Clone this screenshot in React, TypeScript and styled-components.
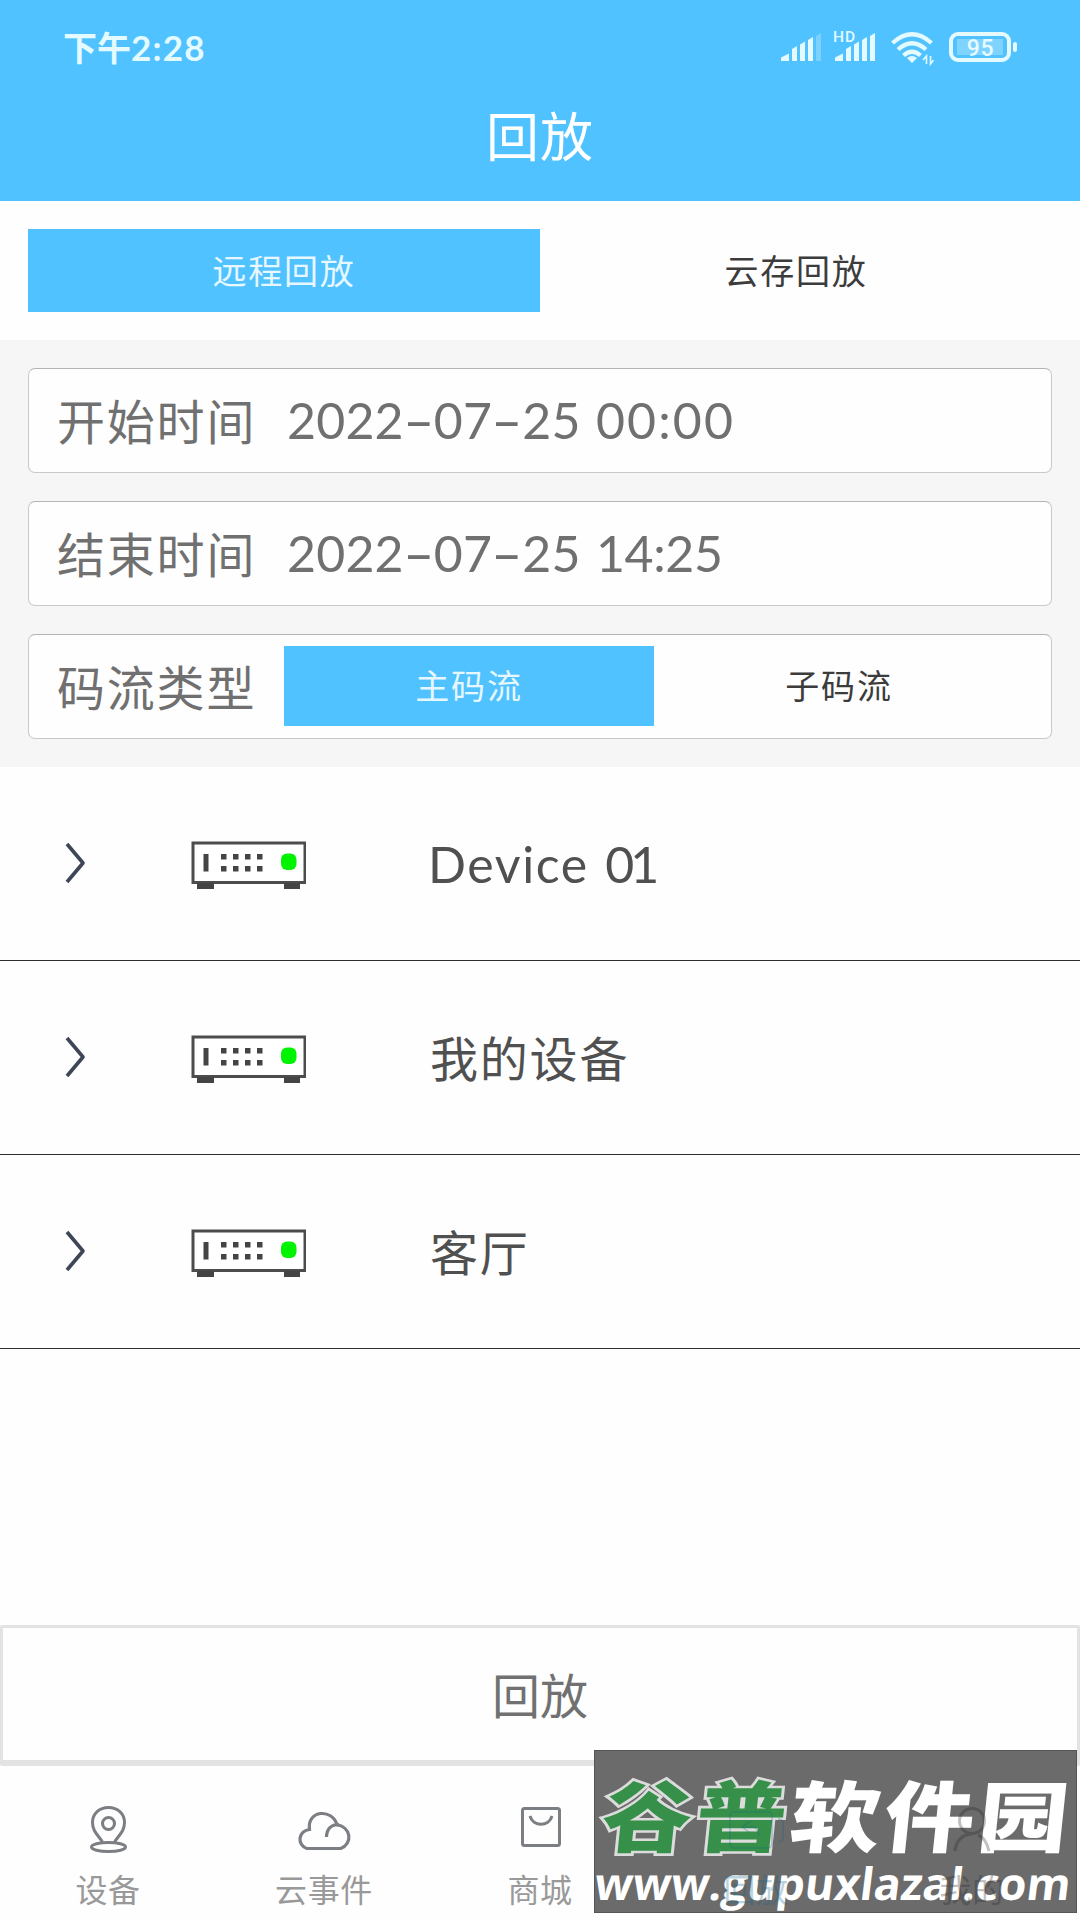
import React from 'react';
import styled, { createGlobalStyle } from 'styled-components';

const BLUE = '#4fc2ff';
const CJK = `'Noto Sans CJK SC', sans-serif`;

const Global = createGlobalStyle`
  * { box-sizing: border-box; }
  body { margin: 0; background: #fefefe; font-family: Lato, ${CJK}; }
  button { border: 0; padding: 0; margin: 0; background: none; font-family: inherit; }
`;

const Screen = styled.div`
  width: 1080px;
  height: 1920px;
  display: flex;
  flex-direction: column;
  overflow: hidden;
  position: relative;
`;

const Header = styled.header`
  height: 201px;
  background: ${BLUE};
  display: flex;
  flex-direction: column;
`;

const StatusBar = styled.div`
  height: 92px;
  padding: 0 62px 0 63px;
  display: flex;
  align-items: center;
  justify-content: space-between;
  color: #e4faff;
`;

const Clock = styled.span`
  display: flex;
  align-items: center;
  padding-top: 2px;
  font: 700 34px/50px ${CJK};
`;

const ClockDigits = styled.span`
  font-family: Lato, sans-serif;
  font-size: 35px;
  letter-spacing: 1.2px;
`;

const Title = styled.h1`
  margin: 0;
  height: 85px;
  text-align: center;
  color: #fff;
  font: 400 53px/85px ${CJK};
  letter-spacing: 1px;
`;

const TabBar = styled.div`
  height: 139px;
  padding: 28px;
  display: flex;
`;

const Segment = styled.button<{ $active?: boolean }>`
  flex: 1;
  height: 100%;
  padding-bottom: 2px;
  background: ${p => (p.$active ? BLUE : 'transparent')};
  color: ${p => (p.$active ? '#e6f7ff' : '#3c3c3c')};
  font: 400 34px/50px ${CJK};
  letter-spacing: 1.8px;
`;

const Filters = styled.section`
  height: 427px;
  padding: 28px;
  background: #f6f6f6;
  display: flex;
  flex-direction: column;
  gap: 28px;
`;

const Field = styled.div`
  height: 105px;
  border: 1px solid #c9c9c9;
  border-top-color: #b4b4b4;
  border-radius: 7px;
  background: #fefefe;
  display: flex;
  align-items: center;
  color: #707070;
`;

const FieldLabel = styled.span`
  width: 255px;
  padding: 0 0 4px 28px;
  font: 400 48px/72px ${CJK};
  letter-spacing: 1.8px;
  white-space: nowrap;
`;

const FieldValue = styled.span`
  display: flex;
  padding: 0 0 1px 3px;
  font: 400 50px/72px Lato, sans-serif;
`;

const DatePart = styled.span`
  width: 309px;
  letter-spacing: 0.2px;
`;

const TimePart = styled.span<{ $tight: boolean }>`
  letter-spacing: ${p => (p.$tight ? '-0.4px' : '2.1px')};
`;

const Dash = styled.span`
  display: inline-block;
  width: 30px;
  text-align: center;
  transform: scaleX(1.75);
`;

const StreamChoice = styled.div`
  width: 740px;
  height: 80px;
  margin-bottom: 1px;
  display: flex;
`;

const DeviceList = styled.ul`
  list-style: none;
  margin: 0;
  padding: 0;
  height: 858px;
`;

const DeviceRow = styled.li`
  height: 194px;
  border-bottom: 1px solid #2e2e33;
  display: flex;
  align-items: center;
`;

const RowChevron = styled.svg`
  width: 24px;
  height: 42px;
  margin: 0 0 2px 63px;
`;

const RowDevice = styled.svg`
  width: 116px;
  height: 50px;
  margin: 2px 0 0 103px;
`;

const RowName = styled.span<{ $latin?: boolean }>`
  margin-left: ${p => (p.$latin ? '122px' : '124px')};
  padding-top: ${p => (p.$latin ? '0' : '2px')};
  color: #505050;
  font: 400 ${p => (p.$latin ? '50px' : '48px')}/72px Lato, ${CJK};
  letter-spacing: ${p => (p.$latin ? '1.6px' : '1.8px')};
`;

const RowNumber = styled.span`
  margin-left: 2px;
  letter-spacing: -4px;
`;

const PlayButton = styled.button`
  height: 141px;
  padding-bottom: 3px;
  border: 3px solid #e3e3e3;
  border-bottom-width: 6px;
  border-radius: 2px;
  background: #fefefe;
  color: #717171;
  font: 400 48px/72px ${CJK};
`;

const Nav = styled.nav`
  flex: 1;
  display: flex;
`;

const NavItem = styled.div<{ $covered?: boolean; $active?: boolean }>`
  width: 216px;
  display: flex;
  flex-direction: column;
  align-items: center;
  padding-top: 33px;
  position: relative;
  z-index: ${p => (p.$covered ? 2 : 0)};
  opacity: ${p => (p.$covered ? 0.28 : 1)};
  color: ${p => (p.$active ? '#0d6488' : p.$covered ? '#222' : '#999')};
`;

const NavIcon = styled.svg<{ $covered?: boolean }>`
  width: 60px;
  height: 60px;
  color: ${p => (p.$covered ? 'inherit' : '#7b7e82')};
`;

const NavLabel = styled.span`
  margin-top: 9px;
  font: 400 32px/40px ${CJK};
  letter-spacing: 0.6px;
`;

const Watermark = styled.div`
  position: absolute;
  left: 594px;
  top: 1750px;
  width: 483px;
  height: 163px;
  z-index: 1;
  overflow: hidden;
  background: #6b6b6b;
  border: 1px solid #555;
  color: #fff;
`;

const Brand = styled.div`
  position: absolute;
  left: 8px;
  top: 15px;
  white-space: nowrap;
  font: 900 90px/92px ${CJK};
  transform: skewX(-6deg) scaleY(0.86);
  letter-spacing: 4px;
`;

const BrandGreen = styled.span`
  color: #37904a;
  -webkit-text-stroke: 6px #dcdcdc;
  paint-order: stroke fill;
`;

const Site = styled.div`
  position: absolute;
  left: 0;
  top: 107px;
  white-space: nowrap;
  font: 700 44.7px/50px 'Open Sans', sans-serif;
  transform: skewX(-7deg);
`;

const Signal = ({ full }: { full?: boolean }) => (
  <g fill="#e4faff">
    <path d="M0 28v-3.500l8-4v7.500z" />
    <path d="M11 28v-12l5-3v15z" />
    <path d="M19 28v-16.500l5-3v19.500z" />
    <path d="M27 28v-21l5-3v24z" />
    <path d="M35 28v-25l5-3v28z" opacity={full ? 1 : 0.3} />
  </g>
);

const StatusIcons = () => (
  <svg width="237" height="40" viewBox="781 26 237 40">
    <g transform="translate(781 33)"><Signal /></g>
    <g transform="translate(835 33)"><Signal full /></g>
    <rect x="832" y="28" width="24" height="15" fill={BLUE} />
    <text x="833" y="42" fontFamily="Roboto, sans-serif" fontWeight="500" fontSize="15.500" letterSpacing="1" fill="#e4faff">HD</text>
    <g fill="none" stroke="#e4faff" strokeWidth="4.200">
      <path d="M892.500 43Q912 25.500 931.500 43" />
      <path d="M898 49.500Q912 37 926 49.500" />
      <path d="M903.500 55.500Q912 48 920.500 55.500" />
    </g>
    <path d="M907 58q5-4 10 0l-5 5z" fill="#e4faff" />
    <path d="M926.500 64v-8l-3.500 4M930.500 56v8l3-4" fill="none" stroke="#e4faff" strokeWidth="1.600" />
    <rect x="951" y="34" width="58" height="26" rx="7" fill="none" stroke="#e4faff" strokeWidth="4" />
    <rect x="957" y="39" width="46" height="16" fill="#7fd3ff" />
    <rect x="1013" y="42" width="4" height="10" rx="2" fill="#e4faff" />
    <text x="980.500" y="55.500" textAnchor="middle" fontFamily="Roboto, sans-serif" fontWeight="500" fontSize="23" letterSpacing="0.600" fill="#e4faff">95</text>
  </svg>
);

const Chevron = () => (
  <RowChevron viewBox="0 0 24 42" fill="none" stroke="#3d4556" strokeWidth="3.600">
    <path d="M4 2L20 21L4 40" strokeLinejoin="round" />
  </RowChevron>
);

const Recorder = () => (
  <RowDevice viewBox="0 0 116 50" fill="#444">
    <rect x="3" y="3" width="112" height="39.500" fill="#fff" stroke="#4c4c4c" strokeWidth="3" />
    <rect x="7" y="43" width="17" height="6" />
    <rect x="94" y="43" width="16" height="6" />
    <rect x="13.500" y="14" width="5" height="17.500" />
    {[31, 43, 55, 67].map(x => (
      <React.Fragment key={x}>
        <rect x={x} y="14" width="5.500" height="5.500" />
        <rect x={x} y="26" width="5.500" height="5.500" />
      </React.Fragment>
    ))}
    <rect x="91" y="13.500" width="15.500" height="16.500" rx="6" fill="#00f300" />
  </RowDevice>
);

const icons = {
  pin: (
    <>
      <path d="M24.500 43C20 36 14.500 32.500 14.500 23.500C14.500 14.500 21.500 8.500 30.500 8.500S46.500 14.500 46.500 23.500C46.500 32.500 41 36 36.500 43" />
      <circle cx="30.500" cy="24.500" r="6" />
      <ellipse cx="30.500" cy="48" rx="17" ry="4.500" />
    </>
  ),
  cloud: (
    <path d="M14 49.500A9.800 9.800 0 0 1 16.500 30.500C14 11 38 9 42.500 26A12.200 12.200 0 0 1 46 49.500ZM32.500 38Q33 25.500 44.500 25.500" transform="translate(-2 0) scale(1.06 1)" />
  ),
  bag: (
    <>
      <rect x="12.500" y="9.500" width="37" height="37" rx="2" />
      <path d="M20 17C23 28 39 28 42 17" />
    </>
  ),
  replay: (
    <>
      <rect x="4" y="13" width="42" height="36" rx="4" />
      <path d="M52 20q5 0 5 4v15q0 4-5 4M25 22l-9 6 7 5M16 28h10q6 0 7 9" />
    </>
  ),
  user: (
    <>
      <circle cx="30" cy="22" r="12.500" />
      <path d="M13 52Q15 36 30 35M36 36Q44 39 47 52" />
    </>
  ),
};

const tabs: { icon: keyof typeof icons; label: string; covered?: boolean; active?: boolean }[] = [
  { icon: 'pin', label: '设备' },
  { icon: 'cloud', label: '云事件' },
  { icon: 'bag', label: '商城' },
  { icon: 'replay', label: '回放', covered: true, active: true },
  { icon: 'user', label: '我的', covered: true },
];

const DateTime = ({ value }: { value: string }) => {
  const [date, time] = value.split(' ');
  return (
    <FieldValue>
      <DatePart>
        {date.split('').map((c, i) => (c === '-' ? <Dash key={i}>-</Dash> : c))}
      </DatePart>
      <TimePart $tight={time.startsWith('1')}>{time}</TimePart>
    </FieldValue>
  );
};

export default function App() {
  return (
    <Screen>
      <Global />
      <Header>
        <StatusBar>
          <Clock>下午<ClockDigits>2:28</ClockDigits></Clock>
          <StatusIcons />
        </StatusBar>
        <Title>回放</Title>
      </Header>
      <TabBar>
        <Segment $active>远程回放</Segment>
        <Segment>云存回放</Segment>
      </TabBar>
      <Filters>
        <Field><FieldLabel>开始时间</FieldLabel><DateTime value="2022-07-25 00:00" /></Field>
        <Field><FieldLabel>结束时间</FieldLabel><DateTime value="2022-07-25 14:25" /></Field>
        <Field>
          <FieldLabel>码流类型</FieldLabel>
          <StreamChoice>
            <Segment $active>主码流</Segment>
            <Segment>子码流</Segment>
          </StreamChoice>
        </Field>
      </Filters>
      <DeviceList>
        <DeviceRow>
          <Chevron />
          <Recorder />
          <RowName $latin>Device <RowNumber>01</RowNumber></RowName>
        </DeviceRow>
        {['我的设备', '客厅'].map(name => (
          <DeviceRow key={name}>
            <Chevron />
            <Recorder />
            <RowName>{name}</RowName>
          </DeviceRow>
        ))}
      </DeviceList>
      <PlayButton>回放</PlayButton>
      <Nav>
        {tabs.map(t => (
          <NavItem key={t.label} $covered={t.covered} $active={t.active}>
            <NavIcon
              $covered={t.covered}
              viewBox="0 0 60 60"
              fill="none"
              stroke="currentColor"
              strokeWidth={t.active ? 1.5 : 3}
            >
              {icons[t.icon]}
            </NavIcon>
            <NavLabel>{t.label}</NavLabel>
          </NavItem>
        ))}
      </Nav>
      <Watermark>
        <Brand><BrandGreen>谷普</BrandGreen>软件园</Brand>
        <Site>www.gupuxlazal.com</Site>
      </Watermark>
    </Screen>
  );
}
